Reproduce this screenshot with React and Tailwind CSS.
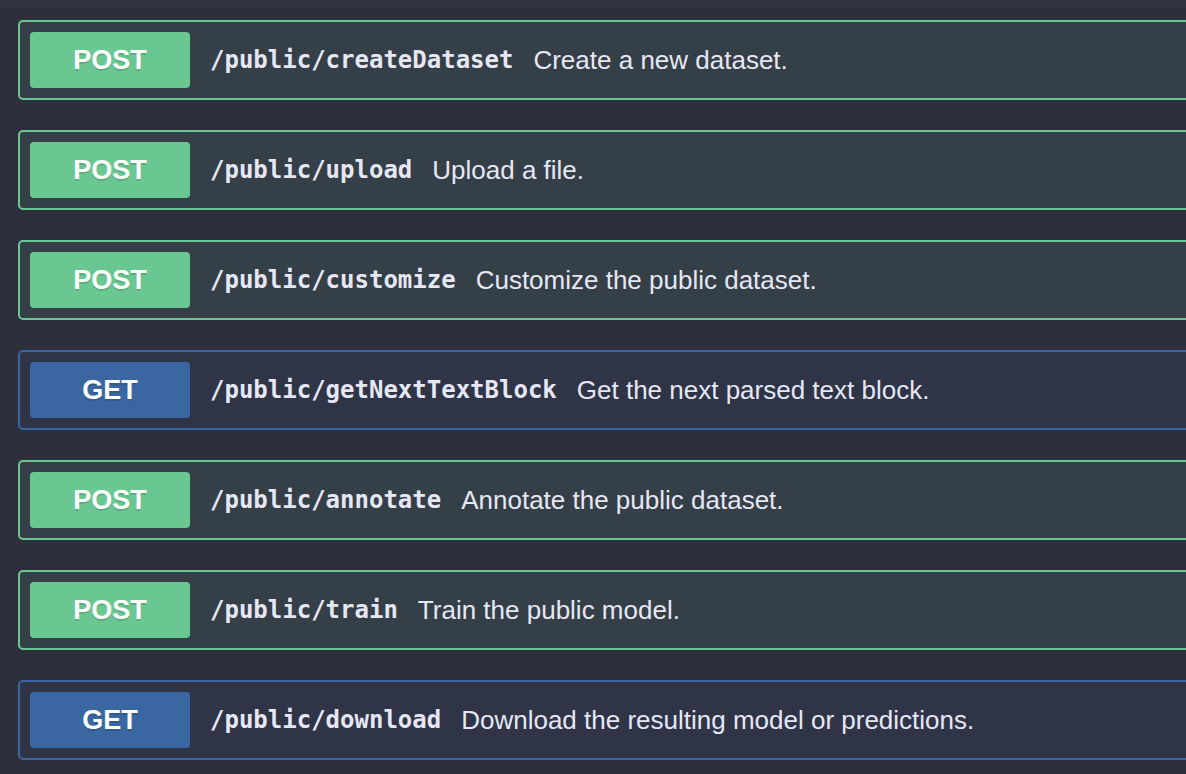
import React from "react";

const endpoints = [
    { method: "POST", path: "/public/createDataset", desc: "Create a new dataset." },
    { method: "POST", path: "/public/upload", desc: "Upload a file." },
    { method: "POST", path: "/public/customize", desc: "Customize the public dataset." },
    { method: "GET", path: "/public/getNextTextBlock", desc: "Get the next parsed text block." },
    { method: "POST", path: "/public/annotate", desc: "Annotate the public dataset." },
    { method: "POST", path: "/public/train", desc: "Train the public model." },
    { method: "GET", path: "/public/download", desc: "Download the resulting model or predictions." },
];

function Endpoint({ method, path, desc }) {
    const isGet = method === "GET";
    return (
        <div
            className={`w-[1200px] h-[80px] flex items-center p-[10px] rounded-[5px] border-2 ${
                isGet ? "border-[#3a66a0] bg-[#2f3447]" : "border-[#6bc792] bg-[#353f47]"
            }`}
        >
            {/* method badge */}
            <div
                className={`w-[160px] h-[56px] shrink-0 rounded-[4px] flex items-center justify-center text-white font-bold text-[27px] [text-shadow:0_2px_0_rgba(0,0,0,0.12)] ${
                    isGet ? "bg-[#3a67a1]" : "bg-[#6ac791]"
                }`}
                style={{ fontFamily: "'Liberation Sans', Arial, sans-serif" }}
            >
                {method}
            </div>
            <span
                className="px-5 text-[24px] font-bold text-[#e6e7f4] whitespace-nowrap"
                style={{ fontFamily: "'DejaVu Sans Mono', monospace" }}
            >
                {path}
            </span>
            <span
                className="text-[26px] text-[#e6e7f4] whitespace-nowrap"
                style={{ fontFamily: "'Liberation Sans', Arial, sans-serif" }}
            >
                {desc}
            </span>
        </div>
    );
}

export default function App() {
    return (
        <div className="w-[1186px] h-[774px] overflow-hidden bg-[#2d2f3c]">
            <div className="h-[8px] bg-[#30323f]"></div>
            <div className="pl-[18px] pt-[12px] flex flex-col gap-[30px]">
                {endpoints.map((ep) => (
                    <Endpoint key={ep.path} {...ep} />
                ))}
            </div>
        </div>
    );
}
